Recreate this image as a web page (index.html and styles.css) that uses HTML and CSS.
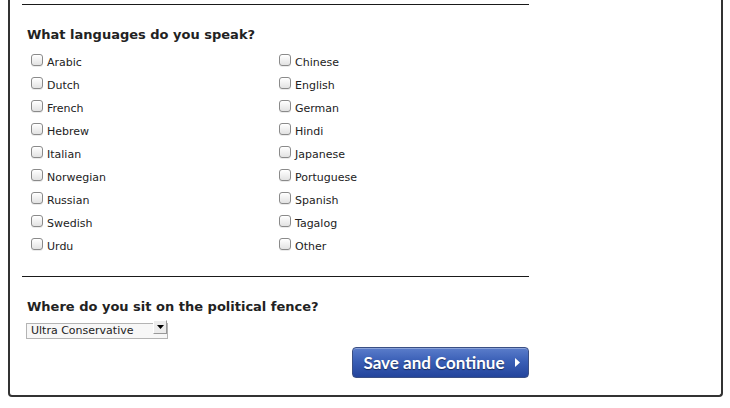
FILE: index.html
```html
<!DOCTYPE html>
<html lang="en">
<head>
    <meta charset="UTF-8">
    <meta name="viewport" content="width=device-width, initial-scale=1.0">
    <title>Profile - Languages</title>
    <link rel="stylesheet" href="styles.css">
</head>
<body>
    <div class="panel">
        <form class="survey">
            <hr class="rule">
            <h2>What languages do you speak?</h2>
            <div class="langs">
                <label class="lang"><input type="checkbox" name="lang" value="ar"><span>Arabic</span></label>
                <label class="lang"><input type="checkbox" name="lang" value="zh"><span>Chinese</span></label>
                <label class="lang"><input type="checkbox" name="lang" value="nl"><span>Dutch</span></label>
                <label class="lang"><input type="checkbox" name="lang" value="en"><span>English</span></label>
                <label class="lang"><input type="checkbox" name="lang" value="fr"><span>French</span></label>
                <label class="lang"><input type="checkbox" name="lang" value="de"><span>German</span></label>
                <label class="lang"><input type="checkbox" name="lang" value="he"><span>Hebrew</span></label>
                <label class="lang"><input type="checkbox" name="lang" value="hi"><span>Hindi</span></label>
                <label class="lang"><input type="checkbox" name="lang" value="it"><span>Italian</span></label>
                <label class="lang"><input type="checkbox" name="lang" value="ja"><span>Japanese</span></label>
                <label class="lang"><input type="checkbox" name="lang" value="no"><span>Norwegian</span></label>
                <label class="lang"><input type="checkbox" name="lang" value="pt"><span>Portuguese</span></label>
                <label class="lang"><input type="checkbox" name="lang" value="ru"><span>Russian</span></label>
                <label class="lang"><input type="checkbox" name="lang" value="es"><span>Spanish</span></label>
                <label class="lang"><input type="checkbox" name="lang" value="sv"><span>Swedish</span></label>
                <label class="lang"><input type="checkbox" name="lang" value="tl"><span>Tagalog</span></label>
                <label class="lang"><input type="checkbox" name="lang" value="ur"><span>Urdu</span></label>
                <label class="lang"><input type="checkbox" name="lang" value="other"><span>Other</span></label>
            </div>
            <hr class="rule rule-mid">
            <h2 class="politics">Where do you sit on the political fence?</h2>
            <div class="select-wrap">
                <select name="politics">
                    <option>Ultra Conservative</option>
                    <option>Conservative</option>
                    <option>Moderate</option>
                    <option>Liberal</option>
                    <option>Ultra Liberal</option>
                </select>
                <span class="select-arrow">
                    <svg width="7" height="4" viewBox="0 0 7 4"><path d="M0 0h7L3.5 4z" fill="#000"/></svg>
                </span>
            </div>
            <div class="actions">
                <button type="button" class="save-btn">Save and Continue
                    <svg width="5" height="9" viewBox="0 0 5 9"><path d="M0 0l5 4.5L0 9z" fill="#fff"/></svg>
                </button>
            </div>
        </form>
    </div>
</body>
</html>
```

FILE: styles.css
```css
body { margin: 0 7px 0 8px; background: #fff; font-family: "DejaVu Sans", Verdana, sans-serif; color: #222; }
.panel { border: 2px solid #333; border-top: none; border-radius: 0 0 4px 4px; height: 397px; box-sizing: border-box; padding: 0 12px; }
.survey { width: 507px; display: flex; flex-direction: column; }
.rule { margin: 4px 0 0; border: none; border-top: 1px solid #1a1a1a; height: 0; }
.rule-mid { margin-top: 20px; }
h2 { margin: 22px 0 0 5px; font-size: 13px; font-weight: bold; color: #222; }
h2.politics { margin-top: 22px; }
.langs { display: grid; grid-template-columns: 248px 248px; grid-auto-rows: 23px; margin-top: 7px; padding-left: 9px; }
.lang { display: flex; align-items: flex-start; font-size: 11px; color: #222; cursor: pointer; }
.lang input { appearance: none; -webkit-appearance: none; margin: 5px 4px 0 0; width: 12px; height: 12px; border: 1px solid #8a8a8a; border-radius: 3px; background: linear-gradient(#ffffff, #e2e2e2); box-shadow: inset 0 1px 1px rgba(255,255,255,0.9), 0 1px 0 rgba(0,0,0,0.08); flex: none; }
.lang span { margin-top: 7px; line-height: 14px; }
.select-wrap { position: relative; width: 142px; height: 16px; margin: 5px 0 0 4px; }
.select-wrap select { appearance: none; -webkit-appearance: none; width: 100%; height: 100%; margin: 0; border: 1px solid #b4b4b4; border-radius: 0; background: #f7f7f7; font-family: "DejaVu Sans", Verdana, sans-serif; font-size: 11px; color: #222; padding: 0 0 0 4px; }
.select-arrow { position: absolute; right: 1px; top: 1px; width: 12px; height: 12px; background: #ececec; border: 1px solid; border-color: #fff #999 #999 #fff; display: flex; align-items: center; justify-content: center; pointer-events: none; }
.actions { display: flex; justify-content: flex-end; margin-top: 12px; }
.save-btn { width: 177px; height: 31px; display: flex; align-items: center; justify-content: center; gap: 10px; padding: 0 0 0 2px; border: 1px solid #3a4f84; border-radius: 4px; background: linear-gradient(#5b7dcb, #3a5fb6 45%, #23449c); color: #fff; font-family: Lato, sans-serif; font-size: 17px; font-weight: bold; text-shadow: 0 1px 1px rgba(0,0,0,0.5); box-shadow: inset 0 1px 0 rgba(255,255,255,0.3); cursor: pointer; }
```
